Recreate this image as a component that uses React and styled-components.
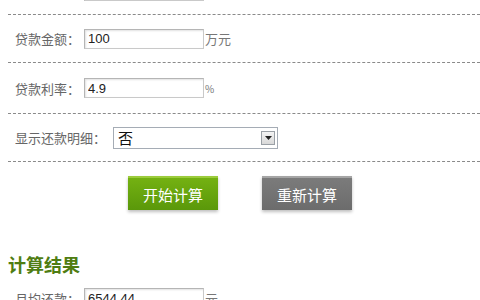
import React from 'react'
import styled, { createGlobalStyle } from 'styled-components'

const GlobalStyle = createGlobalStyle`
  html, body {
    margin: 0;
    padding: 0;
    background: #fff;
    overflow: hidden;
  }
  body {
    font-family: "Liberation Sans", "Noto Sans CJK SC", sans-serif;
  }
`

const rows = [
  { label: '贷款期限：', value: '20', unit: '年', height: 47 },
  { label: '贷款金额：', value: '100', unit: '万元', height: 47 },
  { label: '贷款利率：', value: '4.9', unit: '%', height: 50 }
]

export default function App() {
  return (
    <Page>
      <GlobalStyle />
      <Form>
        {rows.map((r) => (
          <Row key={r.label} $h={r.height}>
            <Label>{r.label}</Label>
            <Input type="text" defaultValue={r.value} />
            <Unit $small={r.unit === '%'}>{r.unit}</Unit>
          </Row>
        ))}
        <Row $h={47}>
          <Label>显示还款明细：</Label>
          <Select>
            <SelectText>否</SelectText>
            <SelectArrow>
              <svg width="7" height="4" viewBox="0 0 7 4">
                <path d="M0 0h7L3.5 4z" fill="#222" />
              </svg>
            </SelectArrow>
          </Select>
        </Row>
      </Form>
      <Buttons>
        <Button $tone="green">开始计算</Button>
        <Button $tone="gray">重新计算</Button>
      </Buttons>
      <Heading>计算结果</Heading>
      <ResultRow>
        <Label>月均还款：</Label>
        <Input type="text" defaultValue="6544.44" />
        <Unit>元</Unit>
      </ResultRow>
    </Page>
  )
}

const Page = styled.div`
  width: 480px;
  height: 300px;
  overflow: hidden;
  padding-left: 8px;
  box-sizing: border-box;
`

const Form = styled.div`
  display: flex;
  flex-direction: column;
  margin-top: -33px;
`

const Row = styled.div`
  display: flex;
  align-items: center;
  height: ${(p) => p.$h}px;
  padding-left: 7px;
  border-bottom: 1px dashed #8a8a8a;
`

const Label = styled.span`
  font-family: "Noto Sans CJK SC", sans-serif;
  font-size: 13px;
  color: #666;
  margin-right: 4px;
`

const Input = styled.input`
  width: 120px;
  height: 20px;
  box-sizing: border-box;
  border: 1px solid #c9c9c9;
  border-top-color: #b5b5b5;
  border-left-color: #b5b5b5;
  box-shadow: inset 1px 1px 2px rgba(0, 0, 0, 0.12);
  padding: 0 3px;
  font-family: "Liberation Sans", Arial, sans-serif;
  font-size: 13px;
  color: #222;
  outline: none;
`

const Unit = styled.span`
  font-family: "Noto Sans CJK SC", sans-serif;
  font-size: ${(p) => (p.$small ? '10px' : '13px')};
  color: #777;
  margin-left: 1px;
`

const Select = styled.div`
  display: flex;
  align-items: center;
  justify-content: space-between;
  width: 165px;
  height: 22px;
  box-sizing: border-box;
  border: 1px solid #a5acb5;
  margin-left: 3px;
  padding: 0 2px 0 4px;
  background: #fff;
`

const SelectText = styled.span`
  font-family: "Noto Sans CJK SC", sans-serif;
  font-size: 15px;
  color: #111;
`

const SelectArrow = styled.span`
  display: flex;
  align-items: center;
  justify-content: center;
  width: 14px;
  height: 14px;
  box-sizing: border-box;
  border: 1px solid #9aa0a6;
  background: linear-gradient(#f4f4f4, #d8d8d8);
`

const Buttons = styled.div`
  display: flex;
  gap: 44px;
  padding-left: 120px;
  margin-top: 14px;
`

const Button = styled.button`
  width: 90px;
  height: 34px;
  border: none;
  border-top: 2px solid
    ${(p) => (p.$tone === 'green' ? '#9ccc3d' : '#a5a5a5')};
  background: ${(p) =>
    p.$tone === 'green'
      ? 'linear-gradient(#74b112, #5a980a)'
      : 'linear-gradient(#7b7b7b, #6c6c6c)'};
  box-shadow: 0 2px 3px rgba(0, 0, 0, 0.25);
  color: #fff;
  font-family: "Noto Sans CJK SC", sans-serif;
  font-size: 15px;
  cursor: pointer;
  padding: 0;
`

const Heading = styled.h3`
  margin: 42px 0 0 0;
  font-family: "Noto Sans CJK SC", sans-serif;
  font-size: 18px;
  font-weight: bold;
  color: #4f7d12;
  line-height: 24px;
`

const ResultRow = styled.div`
  display: flex;
  align-items: center;
  margin-top: 12px;
  padding-left: 7px;
`
